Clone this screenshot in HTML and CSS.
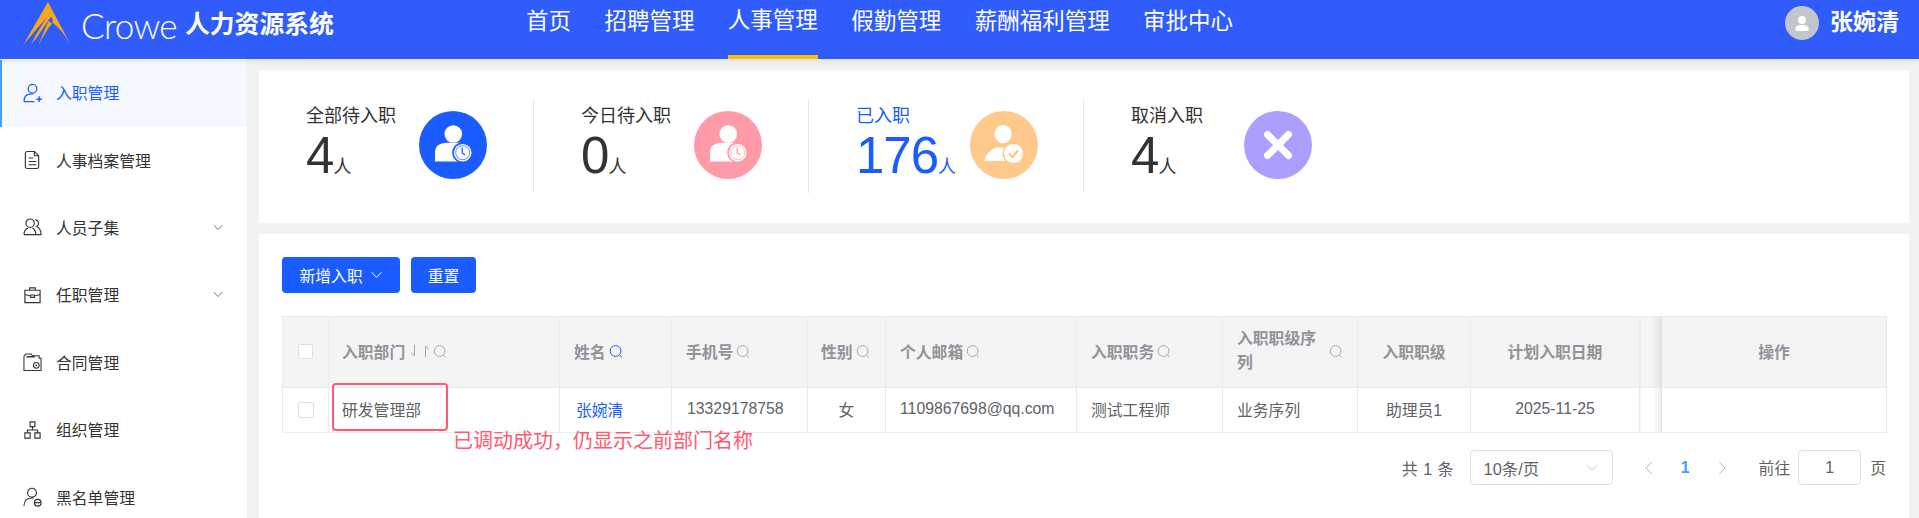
FILE: index.html
```html
<!DOCTYPE html>
<html lang="zh-CN">
<head>
<meta charset="utf-8">
<title>人力资源系统</title>
<link rel="stylesheet" href="styles.css">
</head>
<body>
<svg class="defs" width="0" height="0" aria-hidden="true">
  <symbol id="search" viewBox="0 0 14 13"><circle cx="6.6" cy="6" r="5.4" fill="none" stroke="currentColor" stroke-width="1"/><path d="M10.4 9.8 13 12.4" fill="none" stroke="currentColor" stroke-width="1"/></symbol>
  <symbol id="chev" viewBox="0 0 12 8"><path d="M1 1.2 6 6.4 11 1.2" fill="none" stroke="currentColor" stroke-width="1"/></symbol>
  <symbol id="person" viewBox="0 0 68 68"><circle cx="34.3" cy="23" r="8.8" fill="#fff"/><path d="M16 50.5V41c0-5.5 5-9.2 11-9.2h14.5V50.5z" fill="#fff"/></symbol>
</svg>
<header class="topbar">
  <div class="brand">
    <svg class="logo" viewBox="0 0 48 43" width="48" height="43"><path d="M25 0 47.5 42.5C42 33 36 25.500 29.500 20.500 30 17 29 16 28 15 23 21 15 35 8.500 42 12 34 18 24 24 15.500 19 20.500 8 34 .5 42.500z" fill="#f5a81c"/><path d="M25.500 19C22.500 25 19 35 15.500 42.500 20 35 24 27 29 21.500z" fill="#f5a81c"/></svg>
    <span class="crowe">Crowe</span>
    <span class="sysname">人力资源系统</span>
  </div>
  <nav class="mainnav">
    <a class="navitem">首页</a>
    <a class="navitem">招聘管理</a>
    <a class="navitem active">人事管理</a>
    <a class="navitem">假勤管理</a>
    <a class="navitem">薪酬福利管理</a>
    <a class="navitem">审批中心</a>
  </nav>
  <div class="user">
    <span class="avatar"><svg viewBox="0 0 34 34" width="34" height="34"><circle cx="17" cy="14" r="4" fill="#fff"/><path d="M10.500 25v-2.500c0-2.500 2.500-3.500 6.500-3.500s6.500 1 6.500 3.500V25z" fill="#fff"/></svg></span>
    <span class="username">张婉清</span>
  </div>
</header>

<div class="layout">
  <aside class="sidebar">
    <a class="menuitem current">
      <svg class="micon" viewBox="0 0 20 20"><circle cx="10" cy="5.500" r="4.500" fill="none" stroke="currentColor" stroke-width="1.300"/><path d="M1 19c0-5 3-8 8-8h2M1 19h11" fill="none" stroke="currentColor" stroke-width="1.300"/><path d="M14 16.500h6M17 13.500v6" stroke="currentColor" stroke-width="1.500"/></svg>
      <span>入职管理</span>
    </a>
    <a class="menuitem">
      <svg class="micon" viewBox="0 0 20 20"><path d="M4.500 1h7.500l4.500 4.500v11.500c0 1-.8 2-2 2h-10c-1 0-2-1-2-2V3c0-1 1-2 2-2z" fill="none" stroke="currentColor" stroke-width="1.200"/><path d="M12 1v4.500h4.500M6 8h5M6 11.500h8M6 15h8" fill="none" stroke="currentColor" stroke-width="1.100"/></svg>
      <span>人事档案管理</span>
    </a>
    <a class="menuitem">
      <svg class="micon" viewBox="0 0 20 20"><circle cx="7.500" cy="6" r="4.400" fill="none" stroke="currentColor" stroke-width="1.200"/><path d="M1 18c0-4 1.500-5.500 4-7M10 11c2.500 1.500 3.500 3 3.500 7H1M13 2.500c3.500 0 4.500 5 1.500 7 3 1.500 4.500 3.500 4.500 8.500h-5.500" fill="none" stroke="currentColor" stroke-width="1.200"/></svg>
      <span>人员子集</span>
      <svg class="mchev"><use href="#chev"/></svg>
    </a>
    <a class="menuitem">
      <svg class="micon" viewBox="0 0 20 20"><path d="M2 5h16v13H2zM7 5V2.500h6V5M2 9.500l6 1.500M18 9.500l-6 1.500" fill="none" stroke="currentColor" stroke-width="1.200"/><path d="M8 10h4v2.500H8z" fill="none" stroke="currentColor" stroke-width="1.100"/></svg>
      <span>任职管理</span>
      <svg class="mchev"><use href="#chev"/></svg>
    </a>
    <a class="menuitem">
      <svg class="micon" viewBox="0 0 20 20"><path d="M1 6V19h18V6L17 6V3.500H10L8.500 1.500H3L1 4z" fill="none" stroke="currentColor" stroke-width="1.100"/><path d="M3.500 4.500h9" stroke="currentColor" stroke-width="1.500"/><circle cx="14" cy="13.500" r="3" fill="none" stroke="currentColor" stroke-width="1.100"/><circle cx="14" cy="13.500" r="1" fill="currentColor"/></svg>
      <span>合同管理</span>
    </a>
    <a class="menuitem">
      <svg class="micon" viewBox="0 0 20 20"><path d="M7.500 1.500h5v5h-5zM2 13h5.500v5.500H2zM12.500 13H18v5.500h-5.500zM10 6.500V10M4.700 13v-3h10.600v3" fill="none" stroke="currentColor" stroke-width="1.200"/></svg>
      <span>组织管理</span>
    </a>
    <a class="menuitem">
      <svg class="micon" viewBox="0 0 20 20"><circle cx="9.500" cy="5.500" r="4.700" fill="none" stroke="currentColor" stroke-width="1.200"/><path d="M1 19.500c0-5 3-8.500 8-8.500h2.500" fill="none" stroke="currentColor" stroke-width="1.200"/><circle cx="15.500" cy="16" r="3.500" fill="none" stroke="currentColor" stroke-width="1.300"/><path d="M12.500 16h6" stroke="currentColor" stroke-width="1.300"/></svg>
      <span>黑名单管理</span>
    </a>
  </aside>

  <main class="content">
    <section class="card statcard">
      <div class="stat">
        <div class="stattext"><div class="stattitle">全部待入职</div><div class="statvalue"><b>4</b><small>人</small></div></div>
        <svg class="statico blue" viewBox="0 0 68 68"><circle cx="34" cy="34" r="34" fill="#1a5cff"/><use href="#person"/><circle cx="43.700" cy="41.700" r="10.500" fill="#1a5cff"/><circle cx="43.700" cy="41.700" r="8.800" fill="#fff"/><circle cx="43.700" cy="41.700" r="7" fill="none" stroke="#1a5cff" stroke-width=".7"/><path d="M43.200 36.500v5.500l3 2" fill="none" stroke="#1a5cff" stroke-width="1.300"/></svg>
      </div>
      <div class="stat">
        <div class="stattext"><div class="stattitle">今日待入职</div><div class="statvalue"><b>0</b><small>人</small></div></div>
        <svg class="statico" viewBox="0 0 68 68"><circle cx="34" cy="34" r="34" fill="#ff9aa8"/><use href="#person"/><circle cx="43.700" cy="41.700" r="10.500" fill="#ff9aa8"/><circle cx="43.700" cy="41.700" r="8.800" fill="#fff"/><circle cx="43.700" cy="41.700" r="7" fill="none" stroke="#ff9aa8" stroke-width=".7"/><path d="M43.200 36.500v5.500l3 2" fill="none" stroke="#ff9aa8" stroke-width="1.300"/></svg>
      </div>
      <div class="stat highlight">
        <div class="stattext"><div class="stattitle">已入职</div><div class="statvalue"><b>176</b><small>人</small></div></div>
        <svg class="statico" viewBox="0 0 68 68"><circle cx="34" cy="34" r="34" fill="#ffc98c"/><ellipse cx="33" cy="23" rx="8.500" ry="9.300" fill="#fff"/><path d="M14.500 50c1-7 6-11.500 12-13.500h12V50z" fill="#fff"/><circle cx="43.500" cy="42.500" r="11" fill="#ffc98c"/><circle cx="43.500" cy="42.500" r="9.500" fill="#fff"/><path d="M39 42.500l3.500 3.800 5.500-7" fill="none" stroke="#ffc98c" stroke-width="2.200"/></svg>
      </div>
      <div class="stat last">
        <div class="stattext"><div class="stattitle">取消入职</div><div class="statvalue"><b>4</b><small>人</small></div></div>
        <svg class="statico" viewBox="0 0 68 68"><circle cx="34" cy="34" r="34" fill="#a99fff"/><path d="M23.500 23.500l21 21M44.500 23.500l-21 21" fill="none" stroke="#fff" stroke-width="7" stroke-linecap="round"/></svg>
      </div>
    </section>

    <section class="card listcard">
      <div class="toolbar">
        <button class="btn add">新增入职<svg class="btnchev"><use href="#chev"/></svg></button>
        <button class="btn reset">重置</button>
      </div>

      <div class="tablewrap">
        <table class="grid">
          <colgroup>
            <col class="c-check"><col class="c-dept"><col class="c-name"><col class="c-phone"><col class="c-sex"><col class="c-mail"><col class="c-job"><col class="c-seq"><col class="c-rank"><col class="c-date"><col class="c-gap"><col class="c-op">
          </colgroup>
          <thead>
            <tr>
              <th class="center"><span class="check"></span></th>
              <th class="dept"><span class="thbox">入职部门<svg class="sort" viewBox="0 0 18 12"><path d="M3.500 0v11L.5 7.500M14.500 12V1l3 3.500" fill="none" stroke="currentColor" stroke-width="1"/></svg><svg class="sicon"><use href="#search"/></svg></span></th>
              <th><span class="thbox">姓名<svg class="sicon on"><use href="#search"/></svg></span></th>
              <th><span class="thbox">手机号<svg class="sicon"><use href="#search"/></svg></span></th>
              <th class="sexhead"><span class="thbox">性别<svg class="sicon"><use href="#search"/></svg></span></th>
              <th><span class="thbox">个人邮箱<svg class="sicon"><use href="#search"/></svg></span></th>
              <th><span class="thbox">入职职务<svg class="sicon"><use href="#search"/></svg></span></th>
              <th><span class="thbox seq"><span class="seqtext">入职职级序列</span><svg class="sicon"><use href="#search"/></svg></span></th>
              <th class="center">入职职级</th>
              <th class="center">计划入职日期</th>
              <th class="gap"></th>
              <th class="center">操作</th>
            </tr>
          </thead>
          <tbody>
            <tr>
              <td class="center"><span class="check big"></span></td>
              <td class="dept">研发管理部</td>
              <td class="namecell"><a class="link">张婉清</a></td>
              <td class="phone">13329178758</td>
              <td class="center">女</td>
              <td>1109867698@qq.com</td>
              <td>测试工程师</td>
              <td>业务序列</td>
              <td class="center">助理员1</td>
              <td class="center">2025-11-25</td>
              <td class="gap"></td>
              <td></td>
            </tr>
          </tbody>
        </table>
        <div class="mark"></div>
        <div class="note">已调动成功，仍显示之前部门名称</div>
      </div>

      <div class="pager">
        <span class="total">共 1 条</span>
        <span class="select">10条/页<svg class="selchev"><use href="#chev"/></svg></span>
        <svg class="pgarrow" viewBox="0 0 8 14"><path d="M6.500 1 1 7l5.500 6" fill="none" stroke="currentColor"/></svg>
        <span class="pgnum">1</span>
        <svg class="pgarrow" viewBox="0 0 8 14"><path d="M1.500 1 7 7l-5.500 6" fill="none" stroke="currentColor"/></svg>
        <span class="goto">前往</span>
        <span class="pginput">1</span>
        <span class="pgunit">页</span>
      </div>
    </section>
  </main>
</div>
</body>
</html>
```
FILE: styles.css
```css
* { box-sizing: border-box; }
html, body { margin: 0; height: 518px; overflow: hidden; }
body {
  background: #f1f2f4;
  color: #333;
  font-family: "Liberation Sans", "Noto Sans CJK SC", sans-serif;
  font-size: 15.8px;
}
.defs { position: absolute; }

/* top bar */
.topbar {
  position: relative;
  z-index: 2;
  height: 59px;
  display: flex;
  background: #2f5cfa;
  color: #fff;
  box-shadow: 0 2px 6px rgba(0, 0, 0, .08);
}
.brand { width: 526px; display: flex; align-items: flex-start; padding-left: 23px; }
.logo { margin-top: 2px; flex: none; }
.crowe { margin: 4px 0 0 10px; width: 104px; font-family: Lato, sans-serif; font-weight: 300; font-size: 35px; line-height: 42px; letter-spacing: -.6px; }
.sysname { margin-top: 7px; font-size: 24.800px; line-height: 36px; font-weight: 700; white-space: nowrap; }
.mainnav { display: flex; gap: 33.400px; }
.navitem { height: 59px; font-size: 22.500px; line-height: 44px; white-space: nowrap; }
.navitem.active { line-height: 42px; border-bottom: 4px solid #fdbd00; }
.user { margin-left: auto; display: flex; align-items: flex-start; padding: 6px 20px 0 0; }
.avatar { width: 34px; height: 34px; border-radius: 50%; background: #c2c5cc; }
.avatar svg { display: block; }
.username { margin-left: 11px; font-size: 23px; line-height: 32px; font-weight: 700; }

/* layout */
.layout { display: flex; height: 459px; }
.sidebar { width: 247px; flex: none; background: #fff; overflow: hidden; padding-top: 1px; }
.menuitem {
  height: 67.400px;
  display: flex;
  align-items: center;
  padding: 0 24px 2px 23px;
  color: #333;
  white-space: nowrap;
}
.menuitem.current { background: #f5f9ff; color: #1a5cff; box-shadow: inset 2px 0 0 #409eff; }
.micon { width: 19px; height: 20px; margin-right: 14px; flex: none; }
.mchev { width: 10px; height: 7px; margin-left: auto; color: #555; }

.content { flex: 1; padding: 11px 10px 0 12px; display: flex; flex-direction: column; gap: 11px; min-width: 0; }
.card { background: #fff; }

/* stats */
.statcard { height: 153px; padding: 30px 0 30px 0; display: flex; flex: none; }
.stat { width: 275px; height: 93px; padding: 4px 0 0 47px; display: flex; border-right: 1px solid #e4e5e8; }
.stat.last { border-right: 0; }
.stattext { width: 113px; flex: none; }
.highlight .stattext { width: 114px; }
.stattitle { font-size: 18px; line-height: 24px; white-space: nowrap; }
.statvalue { margin-top: 3px; line-height: 50px; white-space: nowrap; display: flex; align-items: flex-end; }
.statvalue b { font-weight: 400; font-size: 51px; letter-spacing: -1px; }
.statvalue small { font-size: 18px; line-height: 18px; margin-bottom: 5px; }
.statico { width: 68px; height: 68px; margin-top: 7px; flex: none; }
.highlight .stattitle, .highlight .statvalue { color: #1a5cff; }

/* list */
.listcard { flex: 1; padding: 23px 23px 0; }
.toolbar { display: flex; gap: 11px; }
.btn {
  height: 36px;
  border: 0;
  border-radius: 4px;
  background: #1a5cff;
  color: #fff;
  font: inherit;
  padding: 0;
  display: flex;
  align-items: center;
  justify-content: center;
}
.btn.add { width: 118px; }
.btn.reset { width: 65px; }
.btnchev { width: 13px; height: 8px; margin-left: 7px; }

.tablewrap { position: relative; margin-top: 23px; }
.grid { width: 1604px; table-layout: fixed; border-collapse: collapse; }
.c-check { width: 46px; }
.c-dept { width: 231px; }
.c-name { width: 112px; }
.c-phone { width: 136px; }
.c-sex { width: 78px; }
.c-mail { width: 191px; }
.c-job { width: 146px; }
.c-seq { width: 135px; }
.c-rank { width: 113px; }
.c-date { width: 169px; }
.c-gap { width: 22px; }
.c-op { width: 225px; }
.grid th, .grid td { border: 1px solid #e9ebf3; padding: 0 14px 2px; text-align: left; white-space: nowrap; }
.grid th { height: 71px; background: #f4f4f5; color: #909399; font-weight: 700; }
.grid td { height: 45px; color: #606266; }
.grid .center { text-align: center; padding: 0 0 2px; }
.grid .gap { padding: 0; border-right-color: #dfe0e4; background-image: linear-gradient(to right, rgba(0, 0, 0, 0) 55%, rgba(0, 0, 0, .07)); }
.grid .namecell { padding-left: 16px; }
.grid .dept { padding-left: 13px; }
.grid .phone { padding-left: 15px; }
.grid .sexhead { padding-left: 13px; }
.thbox { display: flex; align-items: center; }
.thbox.seq { justify-content: space-between; }
.seqtext { white-space: normal; line-height: 24px; width: 96px; }
.sicon { width: 14px; height: 13px; margin-left: 3px; color: #aaa; font-weight: 400; flex: none; }
.sicon.on { color: #1a5cff; }
.sort { width: 18px; height: 12px; margin-left: 6px; margin-right: 1px; color: #aaa; }
.check { display: inline-block; vertical-align: middle; width: 15px; height: 15px; background: #fff; border: 1px solid #dcdfe6; border-radius: 2px; }
.check.big { width: 16px; height: 16px; }
.link { color: #1a5cff; }
.mark { position: absolute; left: 50px; top: 67px; width: 116px; height: 48px; border: 2.500px solid #ff5a6e; border-radius: 4px; }
.note { position: absolute; left: 171px; top: 109px; color: #ff5a6e; font-size: 20px; line-height: 32px; white-space: nowrap; }

/* pager */
.pager { display: flex; align-items: center; justify-content: flex-end; margin-top: 17px; height: 35px; color: #606266; }
.total { margin-right: 16px; word-spacing: 1px; font-size: 16px; }
.select { width: 143px; height: 35px; border: 1px solid #dcdfe6; border-radius: 4px; padding: 0 13px 0 13px; display: flex; align-items: center; justify-content: space-between; font-size: 16.400px; }
.selchev { width: 14px; height: 8px; color: #c0c4cc; }
.pgarrow { width: 8px; height: 14px; color: #b4b8c0; }
.select + .pgarrow { margin-left: 32px; }
.pgnum { width: 65px; text-align: center; color: #409eff; font-weight: 700; }
.goto { margin-left: 33px; }
.pginput { width: 63px; height: 35px; margin: 0 9px 0 8px; border: 1px solid #dcdfe6; border-radius: 4px; display: flex; align-items: center; justify-content: center; }
```
